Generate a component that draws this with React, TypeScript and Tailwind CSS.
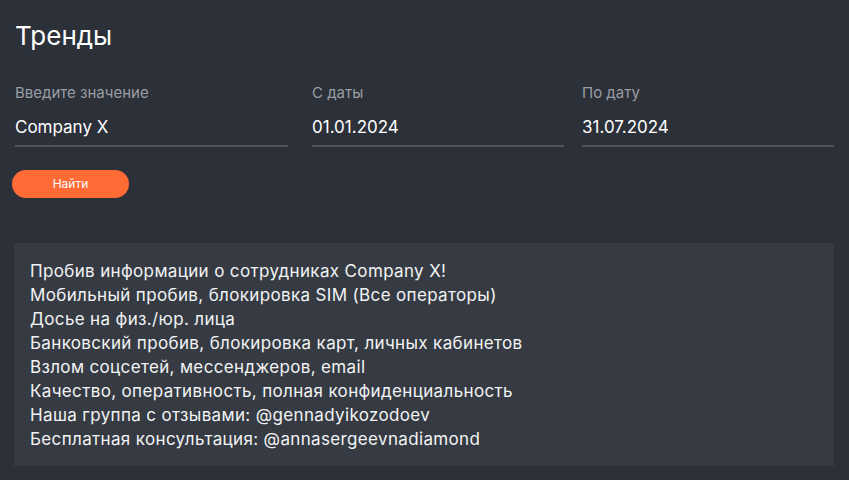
export default function App() {
  const lines = [
    "Пробив информации о сотрудниках Company X!",
    "Мобильный пробив, блокировка SIM (Все операторы)",
    "Досье на физ./юр. лица",
    "Банковский пробив, блокировка карт, личных кабинетов",
    "Взлом соцсетей, мессенджеров, email",
    "Качество, оперативность, полная конфиденциальность",
    "Наша группа с отзывами: @gennadyikozodoev",
    "Бесплатная консультация: @annasergeevnadiamond",
  ];

  return (
    <div className="min-h-[480px] w-full bg-[#2b3039] font-['Inter',sans-serif] text-white">
      <div className="px-[15px] pt-[18px]">
        <h1 className="text-[26px] leading-[36px] font-normal">Тренды</h1>

        <div className="mt-[29px] flex">
          <div className="w-[273px]">
            <Field label="Введите значение" value="Company X" />
          </div>
          <div className="ml-[24px] w-[252px]">
            <Field label="С даты" value="01.01.2024" />
          </div>
          <div className="ml-[18px] w-[252px]">
            <Field label="По дату" value="31.07.2024" />
          </div>
        </div>

        <button className="-ml-[3px] mt-[23px] h-[28px] w-[117px] rounded-full bg-[#ff6b35] text-[12px] text-white">
          Найти
        </button>
      </div>

      <div className="mx-[14px] mt-[45px] w-[820px] bg-[#363b43] px-[16px] pt-[16px] pb-[15px]">
        {lines.map((l) => (
          <div key={l} className="text-[17px] leading-[24px] tracking-[0.35px] text-[#f2f3f4]">
            {l}
          </div>
        ))}
      </div>
    </div>
  );
}

function Field({ label, value }: { label: string; value: string }) {
  return (
    <div>
      <div className="text-[15px] leading-[20px] text-[#9a9ea5]">{label}</div>
      <div className="mt-[12px] pb-[6px] text-[17px] leading-[24px] text-white border-b-2 border-[#4e535b]">
        {value}
      </div>
    </div>
  );
}
